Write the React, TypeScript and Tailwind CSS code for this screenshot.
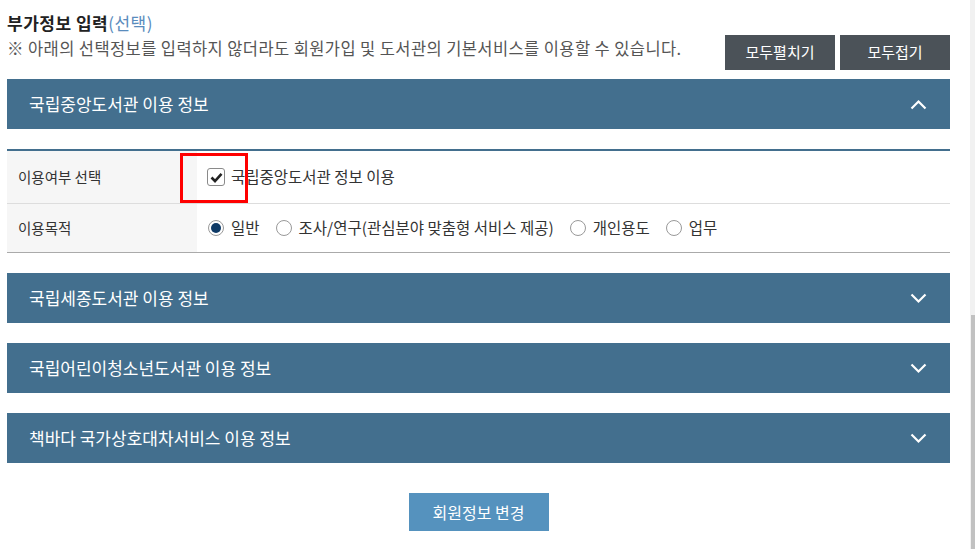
import React, { useState } from 'react';

const font = { fontFamily: '"Noto Sans CJK KR", "Noto Sans", sans-serif' };

const sections = [
  '국립중앙도서관 이용 정보',
  '국립세종도서관 이용 정보',
  '국립어린이청소년도서관 이용 정보',
  '책바다 국가상호대차서비스 이용 정보',
];

const purposes = ['일반', '조사/연구(관심분야 맞춤형 서비스 제공)', '개인용도', '업무'];

const Chevron = ({ up }: { up: boolean }) => (
  <svg width="17" height="11" viewBox="0 0 17 11" fill="none">
    {up ? (
      <polyline points="1.5,9.5 8.5,2.5 15.5,9.5" stroke="white" strokeWidth="2.2" />
    ) : (
      <polyline points="1.5,1.5 8.5,8.5 15.5,1.5" stroke="white" strokeWidth="2.2" />
    )}
  </svg>
);

const SectionHeader = ({ title, open, onClick }: { title: string; open: boolean; onClick: () => void }) => (
  <button
    onClick={onClick}
    className="flex h-[50px] w-full items-center justify-between bg-[#436f8e] pl-[22px] pr-[23px] text-left text-[17px] text-white"
  >
    <span>{title}</span>
    <Chevron up={open} />
  </button>
);

export default function App() {
  const [open, setOpen] = useState<boolean[]>([true, false, false, false]);
  const [use, setUse] = useState(true);
  const [purpose, setPurpose] = useState(0);

  const toggle = (i: number) => setOpen(open.map((v, j) => (j === i ? !v : v)));

  return (
    <div className="flex h-[549px] w-[975px] overflow-hidden bg-white" style={font}>
      <div className="w-[970px] pl-[7px] pr-[20px] pt-[11px]">
        <h2 className="text-[17px] font-bold leading-6 tracking-[0.5px] text-[#222]">
          부가정보 입력<span className="font-normal text-[#5a8cbd]">(선택)</span>
        </h2>
        <div className="flex items-start justify-between">
          <p className="pt-px text-[16.5px] leading-6 tracking-[0.4px] text-[#555]">
            ※ 아래의 선택정보를 입력하지 않더라도 회원가입 및 도서관의 기본서비스를 이용할 수 있습니다.
          </p>
          <div className="flex gap-[5px]">
            <button
              onClick={() => setOpen([true, true, true, true])}
              className="h-[35px] w-[110px] bg-[#4b5258] text-[15px] text-white"
            >
              모두펼치기
            </button>
            <button
              onClick={() => setOpen([false, false, false, false])}
              className="h-[35px] w-[110px] bg-[#4b5258] text-[15px] text-white"
            >
              모두접기
            </button>
          </div>
        </div>

        <div className="mt-[9px] flex flex-col gap-5">
          {sections.map((s, i) => (
            <React.Fragment key={s}>
              <SectionHeader title={s} open={open[i]} onClick={() => toggle(i)} />
              {open[i] && i === 0 && (
                <div className="relative border-t-2 border-b border-t-[#436f8e] border-b-[#aaa] text-[15.5px] text-[#333]">
                  <div className="flex h-[53px] border-b border-[#ddd]">
                    <div className="flex w-[190px] items-center bg-[#f6f6f6] pl-[11px] text-[14.5px]">이용여부 선택</div>
                    <label className="flex cursor-pointer items-center gap-[6px] pl-[10px]">
                      <span
                        onClick={() => setUse(!use)}
                        className="flex h-[18px] w-[18px] items-center justify-center rounded-[3px] border border-[#8a8a8a] bg-white"
                      >
                        {use && (
                          <svg width="13" height="11" viewBox="0 0 13 11">
                            <polyline points="1.5,5.5 5,9 11.5,1.8" fill="none" stroke="#222" strokeWidth="2.6" />
                          </svg>
                        )}
                      </span>
                      <span>국립중앙도서관 정보 이용</span>
                    </label>
                  </div>
                  <div className="flex h-[48px]">
                    <div className="flex w-[190px] items-center bg-[#f6f6f6] pl-[11px] text-[14.5px]">이용목적</div>
                    <div className="flex items-center gap-4 pl-[11px]">
                      {purposes.map((p, k) => (
                        <label key={p} onClick={() => setPurpose(k)} className="flex cursor-pointer items-center gap-[7px]">
                          <span className="flex h-[16px] w-[16px] items-center justify-center rounded-full border border-[#999] bg-white">
                            {purpose === k && <span className="h-[10px] w-[10px] rounded-full bg-[#0e3a66]" />}
                          </span>
                          <span>{p}</span>
                        </label>
                      ))}
                    </div>
                  </div>
                  <div className="absolute left-[173px] top-[2px] h-[50px] w-[68px] border-[3px] border-[#ff0000]" />
                </div>
              )}
            </React.Fragment>
          ))}
        </div>

        <div className="mt-[30px] flex justify-center">
          <button className="h-[38px] w-[140px] bg-[#5592be] text-[16px] text-white">회원정보 변경</button>
        </div>
      </div>
      <div className="relative w-[5px] bg-[#f1f1f1]">
        <div className="absolute right-0 top-[315px] h-[234px] w-[4px] bg-[#c1c1c1]" />
      </div>
    </div>
  );
}
